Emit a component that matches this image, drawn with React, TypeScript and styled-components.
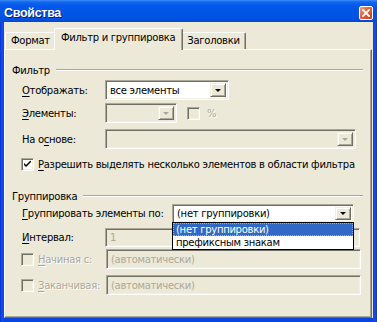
import React from "react";
import styled, { createGlobalStyle, css } from "styled-components";

const Global = createGlobalStyle`
  html, body { margin: 0; padding: 0; background: #ECE9D8; }
  body { font-family: "DejaVu Sans", Tahoma, sans-serif; font-size: 10px; letter-spacing: -0.28px; color: #000; }
  #root { width: 377px; height: 322px; }
`;

const Window = styled.div`
  width: 377px;
  height: 322px;
  box-sizing: border-box;
  display: flex;
  flex-direction: column;
  background: linear-gradient(90deg, #0831D9 0px, #1650E6 2px, #0A46DD 4px, #0A46DD 373px, #1650E6 375px, #0831D9 377px);
`;

const TitleBar = styled.div`
  height: 22px;
  flex: none;
  display: flex;
  align-items: center;
  justify-content: space-between;
  padding: 0 4px 0 4px;
  background: linear-gradient(180deg, #3C8CF6 0px, #1466EE 2px, #0058EA 6px, #0055E5 12px, #0053E2 18px, #0049D2 22px);
`;

const Title = styled.span`
  font-family: "Liberation Sans", Arial, sans-serif;
  font-weight: bold;
  font-size: 12.5px;
  letter-spacing: -0.3px;
  color: #fff;
  text-shadow: 1px 1px #0A1E80;
  margin-top: 3px;
`;

const CloseButton = styled.div`
  width: 14px;
  height: 14px;
  margin-top: 3px;
  box-sizing: border-box;
  border: 1px solid #fff;
  border-radius: 2px;
  background: linear-gradient(135deg, #F0A080 0%, #E2623A 45%, #C6411B 100%);
  display: flex;
  align-items: center;
  justify-content: center;
`;

const Body = styled.div`
  flex: 1;
  margin: 0 4px 4px 4px;
  background: #ECE9D8;
  padding-top: 5px;
  display: flex;
  flex-direction: column;
`;

const TabStrip = styled.div`
  display: flex;
  align-items: flex-end;
  height: 22px;
  padding-left: 1px;
  position: relative;
  z-index: 1;
`;

const Tab = styled.div<{ $active?: boolean }>`
  box-sizing: border-box;
  height: 17px;
  padding: 2px 5px 0 5px;
  background: #ECE9D8;
  border-top: 1px solid #fff;
  border-left: 1px solid #fff;
  border-right: 1px solid #716F64;
  box-shadow: inset -1px 0 #ACA899;
  border-radius: 2px 2px 0 0;
  white-space: nowrap;
  ${(p) =>
    p.$active &&
    css`
      height: 22px;
      margin: 0 -2px -1px -2px;
      padding: 3px 7px 0 6px;
      position: relative;
      z-index: 2;
    `}
`;

const Panel = styled.div`
  flex: 1;
  margin-right: 1px;
  border: 1px solid;
  border-color: #fff #716F64 #716F64 #fff;
  box-shadow: inset -1px -1px #ACA899;
  display: flex;
  flex-direction: column;
  padding: 0 0 0 7px;
`;

const GroupHeader = styled.div<{ $mt: number }>`
  display: flex;
  align-items: center;
  gap: 6px;
  height: 14px;
  margin-top: ${(p) => p.$mt}px;
  margin-right: 8px;
  &::after {
    content: "";
    flex: 1;
    height: 0;
    border-top: 1px solid #ACA899;
    border-bottom: 1px solid #fff;
  }
`;

const Row = styled.div<{ $mt: number; $h?: number }>`
  display: flex;
  align-items: center;
  height: ${(p) => p.$h ?? 20}px;
  margin-top: ${(p) => p.$mt}px;
  padding-left: 10px;
`;

const Label = styled.span<{ $w: number; $disabled?: boolean }>`
  width: ${(p) => p.$w}px;
  flex: none;
  white-space: nowrap;
  ${(p) =>
    p.$disabled &&
    css`
      color: #ACA899;
      text-shadow: 1px 1px #fff;
    `}
  u { text-decoration: underline; text-underline-offset: 2px; }
`;

const Field = styled.div<{ $w: number; $disabled?: boolean }>`
  width: ${(p) => p.$w}px;
  height: 100%;
  box-sizing: border-box;
  flex: none;
  border: 1px solid;
  border-color: #ACA899 #fff #fff #ACA899;
  box-shadow: inset 1px 1px #716F64, inset -1px -1px #F1EFE2;
  background: ${(p) => (p.$disabled ? "#ECE9D8" : "#fff")};
  color: ${(p) => (p.$disabled ? "#ACA899" : "#000")};
  display: flex;
  align-items: center;
  padding: 2px 2px 2px 4px;
  position: relative;
  white-space: nowrap;
`;

const FieldText = styled.span`
  flex: 1;
`;

const DropButton = styled.div<{ $disabled?: boolean }>`
  width: 16px;
  height: 100%;
  box-sizing: border-box;
  flex: none;
  background: #ECE9D8;
  border: 1px solid;
  border-color: #F1EFE2 #716F64 #716F64 #F1EFE2;
  box-shadow: inset 1px 1px #fff, inset -1px -1px #ACA899;
  display: flex;
  align-items: center;
  justify-content: center;
  &::before {
    content: "";
    width: 0;
    height: 0;
    border-left: 3px solid transparent;
    border-right: 3px solid transparent;
    border-top: 3px solid ${(p) => (p.$disabled ? "#ACA899" : "#000")};
  }
`;

const Check = styled.div<{ $disabled?: boolean }>`
  width: 13px;
  height: 13px;
  box-sizing: border-box;
  flex: none;
  border: 1px solid;
  border-color: #ACA899 #fff #fff #ACA899;
  box-shadow: inset 1px 1px #716F64, inset -1px -1px #F1EFE2;
  background: ${(p) => (p.$disabled ? "#ECE9D8" : "#fff")};
  display: flex;
  align-items: center;
  justify-content: center;
`;

const Percent = styled.span`
  color: #ACA899;
  text-shadow: 1px 1px #fff;
  margin-left: 7px;
`;

const CheckLabel = styled.span<{ $disabled?: boolean }>`
  margin-left: 4px;
  white-space: nowrap;
  ${(p) =>
    p.$disabled &&
    css`
      color: #ACA899;
      text-shadow: 1px 1px #fff;
    `}
  u { text-decoration: underline; text-underline-offset: 2px; }
`;

const ListBox = styled.div`
  position: absolute;
  left: -1px;
  top: 100%;
  width: calc(100% + 2px);
  box-sizing: border-box;
  border: 1px solid #000;
  background: #fff;
  color: #000;
  z-index: 5;
`;

const ListItem = styled.div<{ $selected?: boolean }>`
  height: 13px;
  line-height: 13px;
  padding-left: 3px;
  box-sizing: border-box;
  ${(p) =>
    p.$selected &&
    css`
      background: #316AC5;
      color: #fff;
      outline: 1px dotted #E8A040;
      outline-offset: -1px;
    `}
`;

const CheckMark = () => (
  <svg width="7" height="7" viewBox="0 0 7 7">
    <path d="M0 2 L0 4 L2 6 L7 1 L7 -1 L2 4 Z" fill="#000" />
  </svg>
);

const CloseX = () => (
  <svg width="8" height="8" viewBox="0 0 8 8">
    <path d="M1 1 L7 7 M7 1 L1 7" stroke="#fff" strokeWidth="1.8" strokeLinecap="square" />
  </svg>
);

export default function App() {
  return (
    <>
      <Global />
      <Window>
        <TitleBar>
          <Title>Свойства</Title>
          <CloseButton>
            <CloseX />
          </CloseButton>
        </TitleBar>
        <Body>
          <TabStrip>
            <Tab>Формат</Tab>
            <Tab $active>Фильтр и группировка</Tab>
            <Tab>Заголовки</Tab>
          </TabStrip>
          <Panel>
            <GroupHeader $mt={13}>Фильтр</GroupHeader>
            <Row $mt={3}>
              <Label $w={83}>
                <u>О</u>тображать:
              </Label>
              <Field $w={124}>
                <FieldText>все элементы</FieldText>
                <DropButton />
              </Field>
            </Row>
            <Row $mt={3}>
              <Label $w={83}>
                <u>Э</u>лементы:
              </Label>
              <Field $w={72} $disabled>
                <FieldText />
                <DropButton $disabled />
              </Field>
              <Check $disabled style={{ marginLeft: 10 }} />
              <Percent>%</Percent>
            </Row>
            <Row $mt={6}>
              <Label $w={83}>
                На о<u>с</u>нове:
              </Label>
              <Field $w={251} $disabled>
                <FieldText />
                <DropButton $disabled />
              </Field>
            </Row>
            <Row $mt={8} $h={14} style={{ paddingLeft: 9 }}>
              <Check>
                <CheckMark />
              </Check>
              <CheckLabel>
                <u>Р</u>азрешить выделять несколько элементов в области фильтра
              </CheckLabel>
            </Row>
            <GroupHeader $mt={18}>Группировка</GroupHeader>
            <Row $mt={1} $h={19}>
              <Label $w={150}>
                <u>Г</u>руппировать элементы по:
              </Label>
              <Field $w={182}>
                <FieldText>(нет группировки)</FieldText>
                <DropButton />
                <ListBox>
                  <ListItem $selected>(нет группировки)</ListItem>
                  <ListItem>префиксным знакам</ListItem>
                </ListBox>
              </Field>
            </Row>
            <Row $mt={5} $h={19}>
              <Label $w={83}>
                <u>И</u>нтервал:
              </Label>
              <Field $w={255} $disabled>
                <FieldText>1</FieldText>
              </Field>
            </Row>
            <Row $mt={2} style={{ paddingLeft: 9 }}>
              <Check $disabled />
              <CheckLabel $disabled style={{ width: 68 }}>
                <u>Н</u>ачиная с:
              </CheckLabel>
              <Field $w={255} $disabled>
                <FieldText>(автоматически)</FieldText>
              </Field>
            </Row>
            <Row $mt={6} style={{ paddingLeft: 9 }}>
              <Check $disabled />
              <CheckLabel $disabled style={{ width: 68 }}>
                <u>З</u>аканчивая:
              </CheckLabel>
              <Field $w={255} $disabled>
                <FieldText>(автоматически)</FieldText>
              </Field>
            </Row>
          </Panel>
        </Body>
      </Window>
    </>
  );
}
